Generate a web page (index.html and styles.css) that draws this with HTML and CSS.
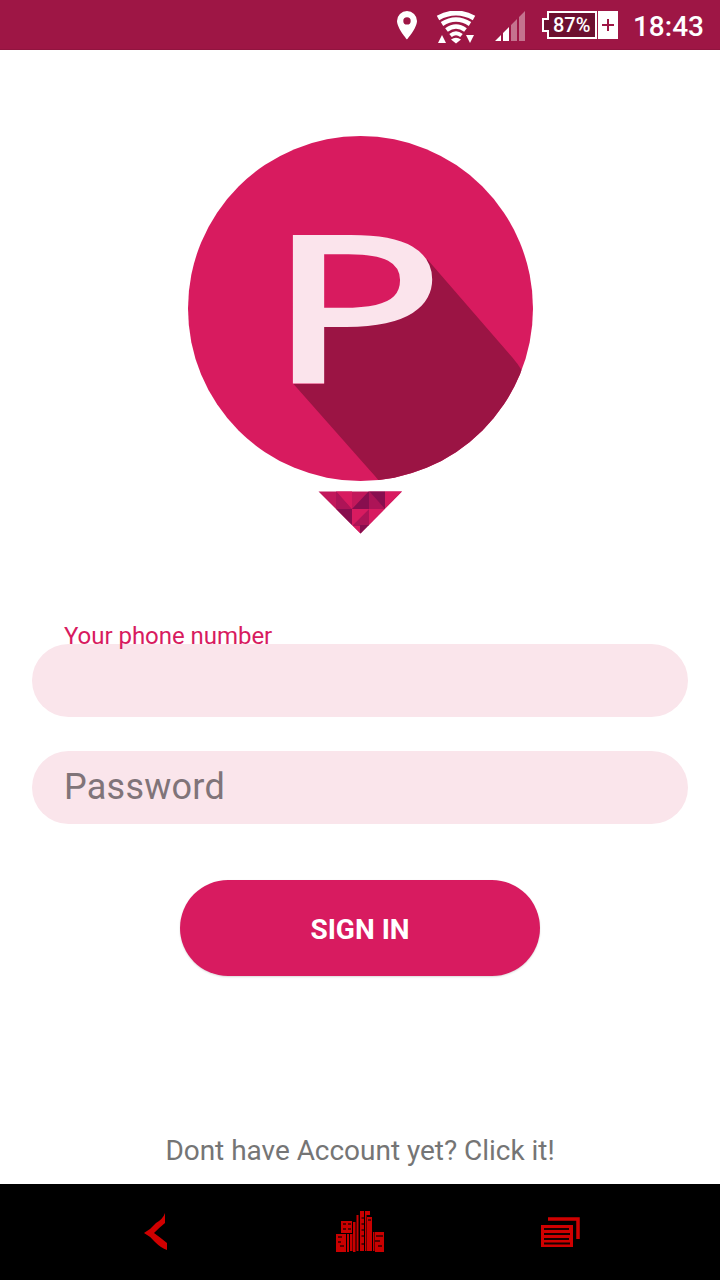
FILE: index.html
```html
<!DOCTYPE html>
<html lang="en">
<head>
<meta charset="utf-8">
<title>Sign in</title>
<link rel="stylesheet" href="styles.css">
</head>
<body>
<div class="screen">
  <header class="status-bar">
    <svg class="icon-location" width="20" height="29" viewBox="0 0 20 29"><path fill="#fff" fill-rule="evenodd" d="M10 0A10 10 0 0 0 0 10C0 17 10 28.500 10 28.500S20 17 20 10A10 10 0 0 0 10 0ZM10 6.200A3.700 3.700 0 1 1 10 13.600A3.700 3.700 0 1 1 10 6.200Z"/></svg>
    <svg class="icon-wifi" width="40" height="34" viewBox="0 0 40 34">
      <g fill="none" stroke="#fff">
        <path d="M2 7Q20-3 38 7" stroke-width="5"/>
        <path d="M6 13Q20 4 34 13" stroke-width="4.500"/>
        <path d="M10.500 19Q20 12 29.500 19" stroke-width="4.500"/>
        <path d="M14.500 24.500Q20 20 25.500 24.500" stroke-width="4"/>
      </g>
      <path fill="#fff" d="M15 28.500Q20 25 25 28.500L20 32.500ZM2 32L6 24L10 32ZM30 24H38L34 32Z"/>
    </svg>
    <svg class="icon-signal" width="31" height="30" viewBox="0 0 31 30"><path fill="#fff" d="M0 30L6 24V30ZM8 30V22L14 16V30Z"/><path fill="#fff" fill-opacity=".4" d="M16 30V14L22 8V30ZM24 30V6L30 0V30Z"/></svg>
    <div class="battery">
      <svg class="battery-frame" width="76" height="28" viewBox="0 0 76 28"><path d="M6 1H54V27H6V20H1V8H6Z" fill="#6d0f30" stroke="#fff" stroke-width="2"/><path fill="#fff" d="M56 0H76V28H56Z"/><path d="M60 14H72M66 8V20" stroke="#9e1645" stroke-width="2"/></svg>
      <span class="battery-level">87%</span>
    </div>
    <time class="clock">18:43</time>
  </header>

  <main class="login">
    <svg class="logo" width="346" height="399" viewBox="187 135 346 399" role="img" aria-label="P">
      <defs>
        <clipPath id="disc"><circle cx="360.500" cy="308.500" r="172.500"/></clipPath>
        <clipPath id="gem"><path d="M318.500 491.500H402L360.500 533.500Z"/></clipPath>
      </defs>
      <circle cx="360.500" cy="308.500" r="172.500" fill="#d81b5f"/>
      <path clip-path="url(#disc)" fill="#9b1444" d="M293.500 384L370 470.500Q376 477 379 481L440 520L560 440L521.500 370Q518 364 512 357L427 259L400 315L324 326V384Z"/>
      <text class="logo-letter" transform="translate(267.800 381) scale(1.456 1)">P</text>
      <g clip-path="url(#gem)">
        <path fill="#c2185b" d="M318 491H403V534H318Z"/>
        <path fill="#ad1457" d="M336 491L352 509H336ZM369 491L385 509H369ZM369 509V526H352Z"/>
        <path fill="#880e4f" d="M369 491V509H352ZM369 491H385V509ZM336 509H352V526ZM360 525H369V534H360Z"/>
        <path fill="#d81b60" d="M336 491H352V509ZM385 491H403L385 509ZM352 509H369L352 526ZM369 509H386L369 526ZM352 526H360V534Z"/>
      </g>
    </svg>

    <form class="form">
      <label class="label" for="phone">Your phone number</label>
      <input class="field" id="phone" type="tel">
      <input class="field" type="password" placeholder="Password" aria-label="Password">
      <button class="submit" type="button">SIGN IN</button>
    </form>
    <a class="register">Dont have Account yet? Click it!</a>
  </main>

  <nav class="nav-bar">
    <svg class="nav-back" width="24" height="38" viewBox="0 0 24 38"><path fill="#d00000" d="M21 0V10Q16 14 10 20Q17 25 23 30V37Q17 35 11 29Q6 23 0 20Q7 16 12 10Q19 6 21 0Z"/></svg>
    <svg class="nav-home" width="50" height="42" viewBox="0 0 50 42">
      <path fill="#c90000" d="M0 23H10V41H0ZM11 23H13V41H11ZM5 10H16V22H5ZM14 23H16.500V40H14ZM17 11H19.500V41H17ZM20.500 4H22.500V40H20.500ZM24 0H28V40H24ZM29 2H30.500V40H29ZM31 6H36V40H31ZM29 0H34V4H29ZM37 21H38.500V40H37ZM39 21H48V41H39Z"/>
      <path d="M2 26H6M2 31H5M4 35H8M7 13H10M12 13H15M7 18H10M12 18H15M25.500 7H28M25.500 13H28M25.500 19H28M25.500 25H28M25.500 33H28M32 9H35M40 25H47M39 30H44M42 35H46" fill="none" stroke="#300000" stroke-width="1.500"/>
    </svg>
    <svg class="nav-recent" width="39" height="30" viewBox="0 0 39 30"><path fill="none" stroke="#d00000" stroke-width="3.500" d="M7 2H37V22"/><path fill="#d00000" d="M0 8H32V30H0Z"/><path stroke="#180000" stroke-width="2" d="M3 12H28M3 17H29M3 22H28M3 26.500H29"/></svg>
  </nav>
</div>
</body>
</html>
```
FILE: styles.css
```css
* { box-sizing: border-box; }

body {
  margin: 0;
  background: #fff;
  font-family: Roboto, "Liberation Sans", sans-serif;
}

svg { display: block; }

.screen {
  width: 720px;
  height: 1280px;
  display: flex;
  flex-direction: column;
}

.status-bar {
  height: 50px;
  display: flex;
  align-items: flex-start;
  justify-content: flex-end;
  padding: 11px 16px 0 0;
  background: #9e1645;
  border-bottom: 1px solid #91143f;
  color: #fff;
}

.icon-wifi { margin-left: 19px; }
.icon-signal { margin-left: 19px; }
.battery { position: relative; margin-left: 16px; }

.battery-level {
  position: absolute;
  left: 11px;
  top: 3px;
  font-size: 20px;
  line-height: 22px;
  font-weight: 500;
}

.clock {
  margin-left: 15px;
  font-size: 28px;
  line-height: 31px;
  font-weight: 500;
}

.login {
  flex: 1;
  display: flex;
  flex-direction: column;
  align-items: center;
}

.logo { margin-top: 85px; }

.logo-letter {
  font-family: "Open Sans", sans-serif;
  font-size: 201px;
  fill: #fbe4ec;
  stroke: #fbe4ec;
  stroke-width: 6px;
  vector-effect: non-scaling-stroke;
}

.form {
  width: 656px;
  margin-top: 88px;
  display: flex;
  flex-direction: column;
}

.label {
  z-index: 1;
  height: 22px;
  padding-left: 32px;
  font-size: 24px;
  line-height: 28px;
  letter-spacing: -0.04px;
  color: #d81b60;
}

.field {
  height: 73px;
  padding: 0 32px 1px;
  border: 0;
  border-radius: 37px;
  outline: 0;
  background: #fae5eb;
  font: 36px Roboto, sans-serif;
  letter-spacing: 0.25px;
}

.field + .field { margin-top: 34px; }

.field::placeholder {
  color: #807479;
  opacity: 1;
}

.submit {
  align-self: center;
  width: 360px;
  height: 96px;
  margin-top: 56px;
  padding: 2px 0 0;
  border: 0;
  border-radius: 48px;
  background: #d81b60;
  box-shadow: 0 1px 2px rgba(0, 0, 0, 0.15);
  color: #fff;
  font: 700 28px Roboto, sans-serif;
}

.register {
  margin-top: 158px;
  font-size: 28px;
  line-height: 34px;
  letter-spacing: -0.03px;
  color: #757575;
}

.nav-bar {
  height: 96px;
  display: flex;
  align-items: flex-start;
  background: #000;
}

.nav-back { margin: 29px 0 0 144px; }
.nav-home { margin: 27px 0 0 168px; }
.nav-recent { margin: 33px 0 0 155px; }
```
